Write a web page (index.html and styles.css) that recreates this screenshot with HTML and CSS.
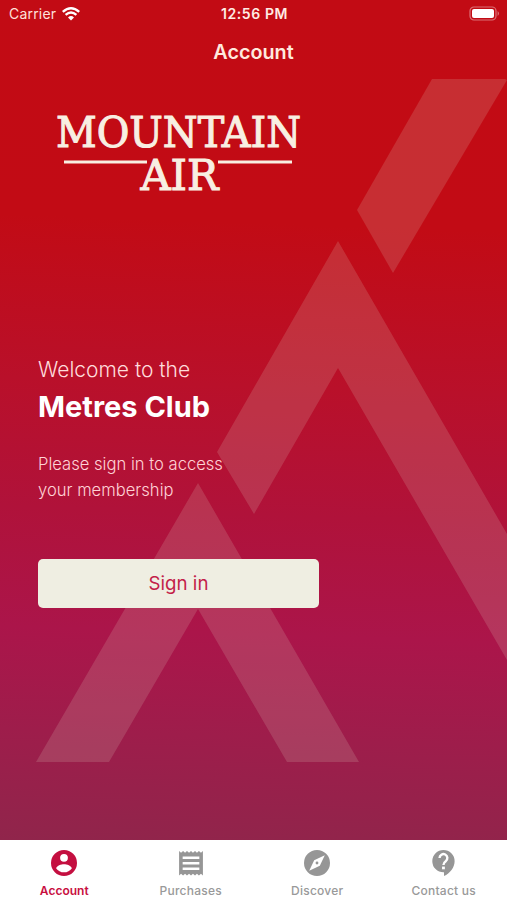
FILE: index.html
```html
<!DOCTYPE html>
<html lang="en">
<head>
    <meta charset="UTF-8">
    <meta name="viewport" content="width=device-width, initial-scale=1.0">
    <title>Mountain Air - Account</title>
    <link rel="stylesheet" href="styles.css">
</head>
<body>
    <div class="screen">
        <svg class="peaks" viewBox="0 0 507 840" aria-hidden="true">
            <path d="M432 79H505L507 80L393 273L357 210Z"/>
            <path d="M338 241L507 534V660L338 368L254 514L217 452Z"/>
            <path d="M198 483L359 762H287L198 609L109 762H36Z"/>
        </svg>

        <div class="status-bar">
            <div class="carrier">
                <span>Carrier</span>
                <svg width="18" height="14" viewBox="0 0 18 14">
                    <path d="M.8 4.9Q9-2.2 17.2 4.9M3.6 7.8Q9 3.2 14.4 7.8" fill="none" stroke="#fff" stroke-width="2.4"/>
                    <path d="M6 10.4Q9 7.8 12 10.4L9 13.5Z" fill="#fff"/>
                </svg>
            </div>
            <div class="time">12:56 PM</div>
            <div class="battery">
                <svg width="31" height="15" viewBox="0 0 31 15">
                    <rect x="1" y="1" width="26" height="13" rx="4" fill="none" stroke="#fff" stroke-opacity=".42" stroke-width="1.2"/>
                    <rect x="3" y="3" width="22" height="9" rx="2" fill="#fff"/>
                    <path d="M28.7 5Q31 7.5 28.7 10Z" fill="#fff" fill-opacity=".5"/>
                </svg>
            </div>
        </div>

        <h1 class="title">Account</h1>

        <svg class="logo" width="260" height="100" viewBox="0 0 260 100">
            <text x="5" y="48" textLength="245" lengthAdjust="spacingAndGlyphs">MOUNTAIN</text>
            <text x="89.5" y="90.5" textLength="78" lengthAdjust="spacingAndGlyphs">AIR</text>
            <path d="M13 63H96M167 63H241"/>
        </svg>

        <div class="welcome">
            <p class="greeting">Welcome to the</p>
            <h2>Metres Club</h2>
            <p class="hint">Please sign in to access<br>your membership</p>
            <button class="sign-in">Sign in</button>
        </div>
    </div>

    <nav class="tabs">
        <a class="tab active">
            <svg viewBox="0 0 24 24"><path fill-rule="evenodd" d="M12 0A12 12 0 1 0 12 24A12 12 0 1 0 12 0ZM12 3.6A3.6 3.6 0 1 1 12 10.8A3.6 3.6 0 1 1 12 3.6ZM12 20.6C9 20.6 6.4 19.2 4.8 17C4.9 14.5 9.6 13.1 12 13.1C14.4 13.1 19.1 14.5 19.2 17C17.6 19.2 15 20.6 12 20.6Z"/></svg>
            <span>Account</span>
        </a>
        <a class="tab">
            <svg viewBox="0 0 24 24"><path fill-rule="evenodd" d="M1 1L2.8 2.6L4.7 1L6.5 2.6L8.3 1L10.2 2.6L12 1L13.8 2.6L15.7 1L17.5 2.6L19.3 1L21.2 2.6L23 1V23.5L21.2 21.9L19.3 23.5L17.5 21.9L15.7 23.5L13.8 21.9L12 23.5L10.2 21.9L8.3 23.5L6.5 21.9L4.7 23.5L2.8 21.9L1 23.5ZM4.3 6V8.2H19.7V6ZM4.3 11.1V13.3H19.7V11.1ZM4.3 16.2V18.4H19.7V16.2Z"/></svg>
            <span>Purchases</span>
        </a>
        <a class="tab">
            <svg viewBox="0 0 24 24"><path fill-rule="evenodd" d="M12 0A12 12 0 1 0 12 24A12 12 0 1 0 12 0ZM19.2 4.8L14.6 14.6L4.8 19.2L9.4 9.4ZM12 10.7A1.3 1.3 0 1 0 12 13.3A1.3 1.3 0 1 0 12 10.7Z"/></svg>
            <span>Discover</span>
        </a>
        <a class="tab">
            <svg viewBox="0 0 24 24">
                <path d="M11.5 0A10.3 10.3 0 0 0 11.5 20.6H12V24C17.5 21.5 21.8 16 21.8 10.3A10.3 10.3 0 0 0 11.5 0Z"/>
                <path class="mark" d="M7.9 7.4A3.6 3.6 0 1 1 13.6 10.3C12.2 11.3 11.5 11.8 11.5 13.8"/>
                <rect x="10.2" y="15.3" width="2.6" height="2.5" fill="#fff"/>
            </svg>
            <span>Contact us</span>
        </a>
    </nav>
</body>
</html>
```
FILE: styles.css
```css
* {
    box-sizing: border-box;
}
body {
    margin: 0;
    height: 900px;
    display: flex;
    flex-direction: column;
    font-family: Inter, "Liberation Sans", sans-serif;
    background: #fff;
    color: #fff;
}
.screen {
    position: relative;
    height: 840px;
    overflow: hidden;
    background: linear-gradient(182deg, #c20b14 0%, #c20b15 27%, #b9102a 46%, #b0123a 61%, #ab154a 75%, #9e1d4b 87%, #90254b 100%);
}
/* translucent mountain shapes behind the content */
.peaks {
    position: absolute;
    top: 0;
    left: 0;
    width: 507px;
    height: 840px;
    fill: rgba(220, 205, 190, 0.18);
}
.status-bar,
.title,
.logo,
.welcome {
    position: relative;
}
.status-bar {
    display: grid;
    grid-template-columns: 1fr auto 1fr;
    align-items: center;
    height: 27px;
    padding: 0 7px 0 9px;
    font-size: 14px;
}
.carrier {
    display: flex;
    align-items: center;
    gap: 6px;
    color: #ffe0da;
    letter-spacing: 0.2px;
}
.time {
    font-size: 14px;
    font-weight: 600;
    letter-spacing: 0.6px;
    color: #ffebe4;
}
.battery {
    display: flex;
    justify-content: flex-end;
}
.title {
    margin: 12px 0 0;
    text-align: center;
    font-size: 19.8px;
    line-height: 27px;
    font-weight: 600;
    color: #ffe9de;
}
.logo {
    display: block;
    margin: 33px 0 0 51px;
    font-family: "DejaVu Serif Condensed", "DejaVu Serif", serif;
    font-size: 43px;
    fill: #f8efe2;
}
.logo text {
    stroke: #f8efe2;
    stroke-width: 1px;
}
.logo path {
    stroke: #f8efe2;
    stroke-width: 3;
}
.welcome {
    margin: 157px 0 0 38px;
}
.greeting {
    margin: 0;
    font-size: 21px;
    line-height: 28px;
    font-weight: 300;
    color: #ffdcdc;
}
.welcome h2 {
    margin: 4px 0 0;
    font-size: 29px;
    line-height: 38px;
    font-weight: 700;
}
.hint {
    margin: 25px 0 0;
    font-size: 16.6px;
    line-height: 26px;
    font-weight: 300;
    color: #ffd2d6;
}
.sign-in {
    display: block;
    width: 281px;
    height: 49px;
    margin: 56px 0 0;
    padding: 0;
    border: none;
    border-radius: 5px;
    background: #efeee2;
    color: #c31e49;
    font: 400 18.7px Inter, sans-serif;
}
.tabs {
    display: flex;
    height: 60px;
    padding-left: 1px;
    background: #fff;
    color: #999;
}
.tab {
    flex: 1;
    display: flex;
    flex-direction: column;
    align-items: center;
    padding-top: 10px;
    font-size: 12px;
    line-height: 16px;
    font-weight: 500;
    letter-spacing: 0.25px;
}
.tab svg {
    width: 26px;
    height: 26px;
    margin-bottom: 7px;
    fill: #969696;
}
.tab .mark {
    fill: none;
    stroke: #fff;
    stroke-width: 2.2;
}
.tab.active {
    color: #c8103f;
    font-weight: 600;
    letter-spacing: 0;
}
.tab.active svg {
    fill: #c40f40;
}
```
